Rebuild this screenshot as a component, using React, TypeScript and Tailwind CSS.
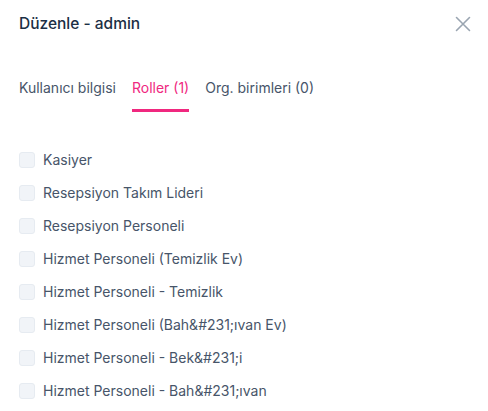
import React from "react";

const roles = [
  "Kasiyer",
  "Resepsiyon Takım Lideri",
  "Resepsiyon Personeli",
  "Hizmet Personeli (Temizlik Ev)",
  "Hizmet Personeli - Temizlik",
  "Hizmet Personeli (Bah&#231;ıvan Ev)",
  "Hizmet Personeli - Bek&#231;i",
  "Hizmet Personeli - Bah&#231;ıvan",
];

export default function App() {
  return (
    <div className="w-[488px] h-[411px] overflow-hidden bg-white" style={{ fontFamily: "Inter, 'Noto Sans', sans-serif" }}>
      <div className="flex items-center justify-between pl-[19px] pr-[16px] h-[48px]">
        <h2 className="text-[15.5px] font-medium text-[#1c2f45] leading-[20px]">Düzenle - admin</h2>
        <button className="w-[18px] h-[18px] flex items-center justify-center text-[#9aa5b1]">
          <svg width="16" height="16" viewBox="0 0 16 16" fill="none" stroke="currentColor" strokeWidth="1.6" strokeLinecap="round">
            <path d="M1.5 1.5L14.5 14.5M14.5 1.5L1.5 14.5" />
          </svg>
        </button>
      </div>
      <div className="flex gap-[16px] pl-[19px] mt-[30px] text-[14px] leading-[20px]">
        <div className="text-[#475569] pb-[11px]">Kullanıcı bilgisi</div>
        <div className="text-[#f0287f] pb-[11px] border-b-[3px] border-[#f0287f]">Roller (1)</div>
        <div className="text-[#475569] pb-[11px]">Org. birimleri (0)</div>
      </div>
      <div className="flex flex-col gap-[17px] pl-[19px] mt-[40px]">
        {roles.map((r) => (
          <label key={r} className="flex items-center gap-[8px] h-[16px]">
            <span className="w-[16px] h-[16px] rounded-[3px] bg-[#f1f4f8] border border-[#e6ebf1] shrink-0" />
            <span className="text-[14px] text-[#475569] leading-[16px]">{r}</span>
          </label>
        ))}
      </div>
    </div>
  );
}
